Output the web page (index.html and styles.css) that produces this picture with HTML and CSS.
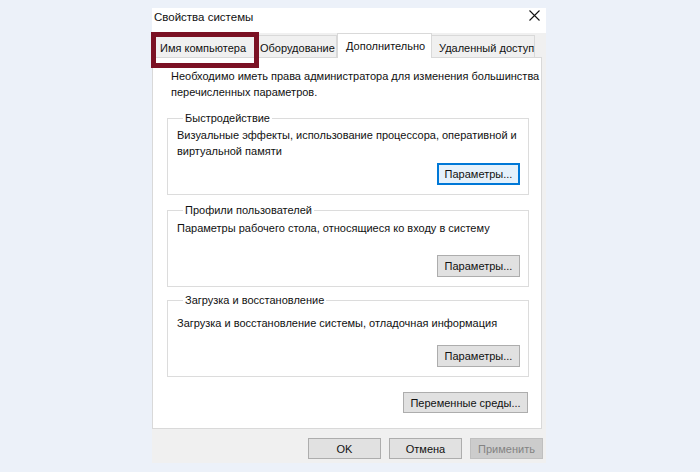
FILE: index.html
```html
<!DOCTYPE html>
<html lang="ru">
<head>
<meta charset="utf-8">
<title>Свойства системы</title>
<link rel="stylesheet" href="styles.css">
</head>
<body>
<div class="dialog">
  <div class="titlebar">
    <span class="title">Свойства системы</span>
    <svg class="close" width="11" height="11" viewBox="0 0 11 11"><path d="M0.5 0.5 L10.5 10.5 M10.5 0.5 L0.5 10.5" stroke="#111" stroke-width="1.1" fill="none"/></svg>
  </div>
  <div class="body">
    <div class="tabs">
      <div class="tab t1">Имя компьютера</div>
      <div class="tab t2">Оборудование</div>
      <div class="tab t3 active">Дополнительно</div>
      <div class="tab t4">Удаленный доступ</div>
    </div>
    <div class="panel">
      <p class="intro">Необходимо иметь права администратора для изменения большинства<br>перечисленных параметров.</p>
      <fieldset class="group g1">
        <legend>Быстродействие</legend>
        <p class="desc">Визуальные эффекты, использование процессора, оперативной и<br>виртуальной памяти</p>
        <button class="btn btn-params focused">Параметры...</button>
      </fieldset>
      <fieldset class="group g2">
        <legend>Профили пользователей</legend>
        <p class="desc">Параметры рабочего стола, относящиеся ко входу в систему</p>
        <button class="btn btn-params">Параметры...</button>
      </fieldset>
      <fieldset class="group g3">
        <legend>Загрузка и восстановление</legend>
        <p class="desc">Загрузка и восстановление системы, отладочная информация</p>
        <button class="btn btn-params">Параметры...</button>
      </fieldset>
      <div class="env-row">
        <button class="btn btn-env">Переменные среды...</button>
      </div>
    </div>
    <div class="footer">
      <button class="btn btn-foot">OK</button>
      <button class="btn btn-foot">Отмена</button>
      <button class="btn btn-foot disabled">Применить</button>
    </div>
  </div>
  <div class="highlight"></div>
</div>
</body>
</html>
```

FILE: styles.css
```css
* { box-sizing: border-box; }
html, body { margin: 0; padding: 0; }
body {
  background: #ecf1f9;
  font-family: "Liberation Sans", Arial, sans-serif;
  font-size: 11px;
  color: #111;
  width: 700px;
  height: 472px;
  overflow: hidden;
}
.dialog {
  position: relative;
  margin: 8px 0 0 152px;
  width: 394px;
  height: 455px;
  background: #f0f0f0;
  display: flex;
  flex-direction: column;
}
.titlebar {
  height: 25px;
  background: #fff;
  display: flex;
  align-items: flex-start;
  justify-content: space-between;
  padding: 1px 6px 0 2px;
}
.title { font-size: 11.5px; line-height: 17px; color: #111; }
.close { display: block; margin-top: 1px; }
.body {
  flex: 1;
  display: flex;
  flex-direction: column;
}
.tabs {
  display: flex;
  align-items: flex-end;
  height: 25px;
  position: relative;
  z-index: 1;
}
.tab {
  height: 22px;
  line-height: 18px;
  padding-top: 3px;
  border: 1px solid #d9d9d9;
  border-bottom: none;
  background: #f0f0f0;
  padding-left: 7px;
  white-space: nowrap;
  margin-bottom: 1px;
}
.t1 { width: 105px; }
.t2 { width: 80px; border-left: none; padding-left: 3px; }
.t3 { width: 95px; }
.t4 { width: 103px; border-left: none; padding-left: 7px; }
.tab.active {
  background: #fff;
  height: 25px;
  line-height: 18px;
  padding-top: 3px;
  margin-bottom: 0;
  padding-left: 8px;
}
.panel {
  height: 372px;
  width: 390px;
  margin-top: -1px;
  background: #fff;
  border: 1px solid #d9d9d9;
  padding: 10px 12px 0 14px;
  white-space: nowrap;
}
.intro {
  margin: 0 0 0 4px;
  line-height: 16px;
}
.group {
  margin: 0;
  border: 1px solid #dcdcdc;
  padding: 0 8px 0 9px;
  min-width: 0;
  display: flex;
  flex-direction: column;
  height: 85px;
}
.group legend {
  margin-left: 6px;
  padding: 0 2px;
  line-height: 16px;
  color: #111;
}
.g1 { margin-top: 10px; }
.g2 { margin-top: 7px; }
.g3 { margin-top: 5px; }
.desc {
  margin: 1px 0 0 0;
  line-height: 16px;
}
.g2 .desc { margin-top: 2px; }
.g3 .desc { margin-top: 7px; }
.btn {
  font-family: inherit;
  font-size: 11px;
  color: #111;
  background: #e1e1e1;
  border: 1px solid #adadad;
  border-radius: 0;
  padding: 0;
  margin: 0;
  height: 22px;
}
.btn-params {
  width: 83px;
  align-self: flex-end;
  margin-top: auto;
  margin-bottom: 9px;
}
.btn.focused {
  background: #e5f1fb;
  border: 2px solid #0078d7;
}
.env-row {
  display: flex;
  justify-content: flex-end;
  margin-top: 15px;
  padding-right: 1px;
}
.btn-env { width: 125px; height: 21px; }
.footer {
  display: flex;
  justify-content: flex-end;
  gap: 8px;
  padding: 9px 3px 0 0;
}
.btn-foot { width: 73px; height: 21px; }
.btn.disabled {
  background: #cccccc;
  border-color: #bfbfbf;
  color: #838383;
}
.highlight {
  position: absolute;
  left: -1px;
  top: 24px;
  width: 108px;
  height: 36px;
  border: 5px solid #7b1124;
  z-index: 5;
}
```
